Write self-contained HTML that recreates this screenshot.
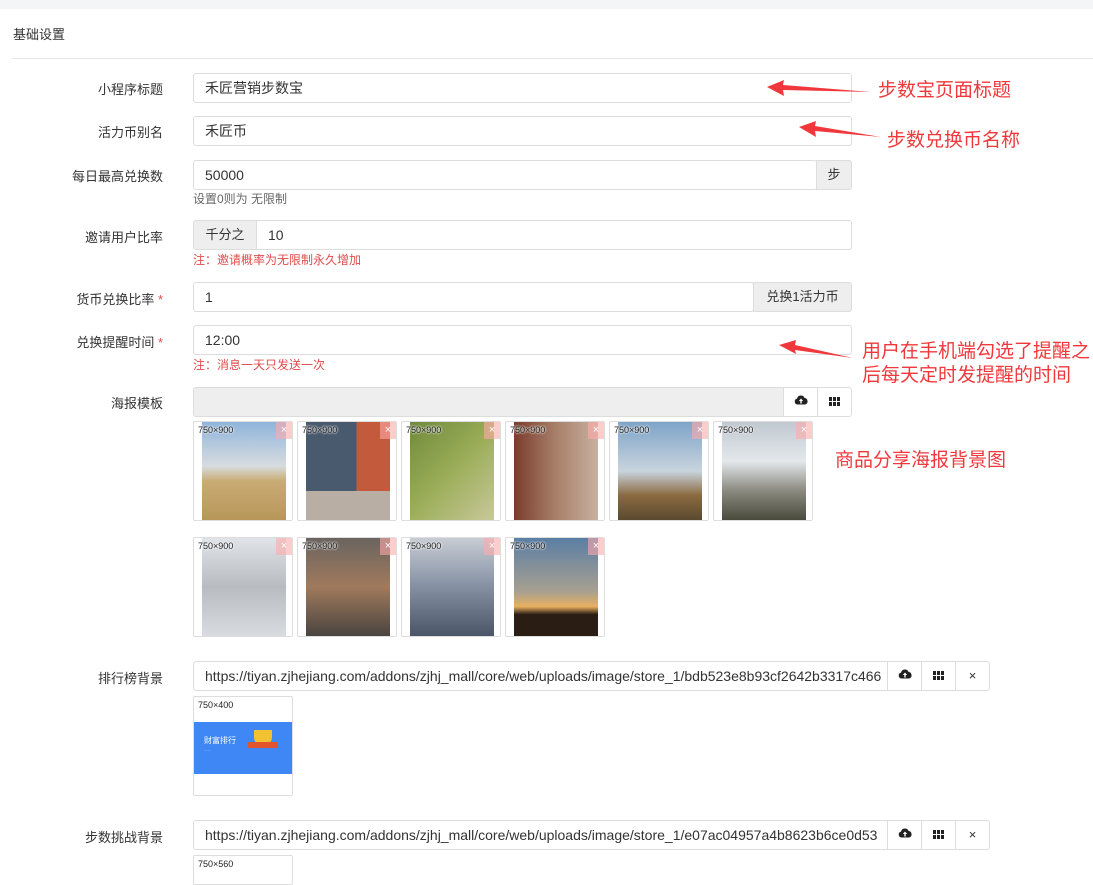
<!DOCTYPE html><html><head><meta charset="utf-8"><style>
*{box-sizing:border-box;margin:0;padding:0}
body{width:1093px;height:867px;overflow:hidden;background:#fff;font-family:"Liberation Sans","Noto Sans CJK SC",sans-serif;font-size:13px;color:#333;position:relative}
.a{position:absolute}
.top{left:0;top:0;width:1093px;height:9px;background:#f4f5f7}
.lbl{width:163px;left:0;text-align:right;font-size:13px;color:#333}
.inp{border:1px solid #ddd;border-radius:3px;height:30px;line-height:28px;padding-left:11px;font-size:14px;color:#333;background:#fff}
.add{background:#eeeeef;border:1px solid #ddd;height:30px;line-height:28px;text-align:center;font-size:13px;color:#333}
.red{color:#e04c4c;font-size:12px}
.help{color:#666;font-size:12px}
.th{width:100px;height:100px;border:1px solid #ddd;border-radius:2px;background:#fff;overflow:hidden}
.th .im{position:absolute;left:8px;top:0;width:84px;height:98px}
.th .s{position:absolute;left:4px;top:3px;font-size:9px;color:#222;text-shadow:0 0 2px #fff,0 0 2px #fff}
.th .x{position:absolute;right:0;top:0;width:16px;height:17px;background:rgba(255,170,170,.6);color:#fff;font-size:11px;text-align:center;line-height:17px}
.btn{border:1px solid #ddd;height:30px;width:35px;background:#fff;text-align:center;line-height:28px}
.ann{color:#f0383c;font-size:19px;font-family:"Noto Sans CJK SC",sans-serif;line-height:24px}
</style></head><body>
<div class="a top"></div>
<div class="a" style="left:13px;top:24px;font-size:13px">基础设置</div>
<div class="a" style="left:12px;top:58px;width:1081px;height:1px;background:#e6e6e6"></div>

<div class="a lbl" style="top:79px">小程序标题</div>
<div class="a inp" style="left:193px;top:73px;width:659px">禾匠营销步数宝</div>
<div class="a lbl" style="top:122px">活力币别名</div>
<div class="a inp" style="left:193px;top:116px;width:659px">禾匠币</div>
<div class="a lbl" style="top:166px">每日最高兑换数</div>
<div class="a inp" style="left:193px;top:160px;width:624px">50000</div>
<div class="a add" style="left:816px;top:160px;width:36px;border-radius:0 3px 3px 0">步</div>
<div class="a help" style="left:193px;top:190px">设置0则为 无限制</div>
<div class="a lbl" style="top:227px">邀请用户比率</div>
<div class="a add" style="left:193px;top:220px;width:64px;border-radius:3px 0 0 3px">千分之</div>
<div class="a inp" style="left:256px;top:220px;width:596px;border-radius:0 3px 3px 0">10</div>
<div class="a red" style="left:193px;top:251px">注：邀请概率为无限制永久增加</div>
<div class="a lbl" style="top:289px">货币兑换比率 <span style="color:#e04c4c">*</span></div>
<div class="a inp" style="left:193px;top:282px;width:561px">1</div>
<div class="a add" style="left:753px;top:282px;width:99px;border-radius:0 3px 3px 0">兑换1活力币</div>
<div class="a lbl" style="top:332px">兑换提醒时间 <span style="color:#e04c4c">*</span></div>
<div class="a inp" style="left:193px;top:325px;width:659px">12:00</div>
<div class="a red" style="left:193px;top:356px">注：消息一天只发送一次</div>
<div class="a lbl" style="top:393px">海报模板</div>
<div class="a add" style="left:193px;top:387px;width:591px;border-radius:3px 0 0 3px"></div>
<div class="a btn" style="left:783px;top:387px"><svg width="14" height="12" viewBox="0 0 14 12"><path d="M3.5 10.5A3 3 0 0 1 3 4.6 4 4 0 0 1 10.6 4 3.3 3.3 0 0 1 11 10.5Z" fill="#222"/><path d="M7 4.5L4.8 7H6.3V9.5H7.7V7H9.2Z" fill="#fff"/></svg></div>
<div class="a btn" style="left:817px;top:387px;border-radius:0 3px 3px 0"><svg width="11" height="9" viewBox="0 0 11 9"><g fill="#222"><rect x="0" y="0" width="3" height="4"/><rect x="4" y="0" width="3" height="4"/><rect x="8" y="0" width="3" height="4"/><rect x="0" y="5" width="3" height="4"/><rect x="4" y="5" width="3" height="4"/><rect x="8" y="5" width="3" height="4"/></g></svg></div>

<div class="a th" style="left:193px;top:421px"><div class="im" style="background:linear-gradient(#8fb4dc,#d7dce0 45%,#c9ac74 60%,#b8965a)"></div><div class="s">750×900</div><div class="x">×</div></div>
<div class="a th" style="left:297px;top:421px"><div class="im" style="background:linear-gradient(90deg,#4a5a6e 60%,#c45a3c 60%);"><div style="position:absolute;bottom:0;width:100%;height:30%;background:#b8aea4"></div></div><div class="s">750×900</div><div class="x">×</div></div>
<div class="a th" style="left:401px;top:421px"><div class="im" style="background:linear-gradient(135deg,#6f8a3c,#9bad58 50%,#c8c89a)"></div><div class="s">750×900</div><div class="x">×</div></div>
<div class="a th" style="left:505px;top:421px"><div class="im" style="background:linear-gradient(90deg,#7a3c2c,#a8806a 50%,#c8b0a0)"></div><div class="s">750×900</div><div class="x">×</div></div>
<div class="a th" style="left:609px;top:421px"><div class="im" style="background:linear-gradient(#7ea4c8,#c8d4de 50%,#8a6a40 75%,#5a4a30)"></div><div class="s">750×900</div><div class="x">×</div></div>
<div class="a th" style="left:713px;top:421px"><div class="im" style="background:linear-gradient(#c0c8d0,#e4e8ec 40%,#8a8a80 70%,#4a4a3c)"></div><div class="s">750×900</div><div class="x">×</div></div>

<div class="a th" style="left:193px;top:537px"><div class="im" style="background:linear-gradient(#e0e4e8,#b8bcc0 50%,#d8dce0)"></div><div class="s">750×900</div><div class="x">×</div></div>
<div class="a th" style="left:297px;top:537px"><div class="im" style="background:linear-gradient(#6a6460,#a07a5c 50%,#4a4440)"></div><div class="s">750×900</div><div class="x">×</div></div>
<div class="a th" style="left:401px;top:537px"><div class="im" style="background:linear-gradient(#c8ccd4,#8a96a8 45%,#4a5668)"></div><div class="s">750×900</div><div class="x">×</div></div>
<div class="a th" style="left:505px;top:537px"><div class="im" style="background:linear-gradient(#5a7ea4,#a8a090 55%,#e8b060 70%,#2a1e14 78%)"></div><div class="s">750×900</div><div class="x">×</div></div>

<div class="a lbl" style="top:668px">排行榜背景</div>
<div class="a inp" style="left:193px;top:661px;width:695px;overflow:hidden;white-space:nowrap;border-radius:3px 0 0 3px">https://tiyan.zjhejiang.com/addons/zjhj_mall/core/web/uploads/image/store_1/bdb523e8b93cf2642b3317c466</div>
<div class="a btn" style="left:887px;top:661px"><svg width="14" height="12" viewBox="0 0 14 12"><path d="M3.5 10.5A3 3 0 0 1 3 4.6 4 4 0 0 1 10.6 4 3.3 3.3 0 0 1 11 10.5Z" fill="#222"/><path d="M7 4.5L4.8 7H6.3V9.5H7.7V7H9.2Z" fill="#fff"/></svg></div>
<div class="a btn" style="left:921px;top:661px"><svg width="11" height="9" viewBox="0 0 11 9"><g fill="#222"><rect x="0" y="0" width="3" height="4"/><rect x="4" y="0" width="3" height="4"/><rect x="8" y="0" width="3" height="4"/><rect x="0" y="5" width="3" height="4"/><rect x="4" y="5" width="3" height="4"/><rect x="8" y="5" width="3" height="4"/></g></svg></div>
<div class="a btn" style="left:955px;top:661px;border-radius:0 3px 3px 0;font-size:13px">×</div>
<div class="a th" style="left:193px;top:696px"><div class="s">750×400</div><div style="position:absolute;left:0;top:25px;width:98px;height:52px;background:#3f87f5"><div style="position:absolute;left:10px;top:13px;color:#fff;font-size:8px">财富排行</div><div style="position:absolute;left:10px;top:25px;color:#cfe0ff;font-size:4px">......</div><div style="position:absolute;left:60px;top:8px;width:18px;height:16px;background:#f2c230;border-radius:0 0 9px 9px"></div><div style="position:absolute;left:54px;top:20px;width:30px;height:6px;background:#e2542c"></div></div></div>

<div class="a lbl" style="top:827px">步数挑战背景</div>
<div class="a inp" style="left:193px;top:820px;width:695px;overflow:hidden;white-space:nowrap;border-radius:3px 0 0 3px">https://tiyan.zjhejiang.com/addons/zjhj_mall/core/web/uploads/image/store_1/e07ac04957a4b8623b6ce0d53</div>
<div class="a btn" style="left:887px;top:820px"><svg width="14" height="12" viewBox="0 0 14 12"><path d="M3.5 10.5A3 3 0 0 1 3 4.6 4 4 0 0 1 10.6 4 3.3 3.3 0 0 1 11 10.5Z" fill="#222"/><path d="M7 4.5L4.8 7H6.3V9.5H7.7V7H9.2Z" fill="#fff"/></svg></div>
<div class="a btn" style="left:921px;top:820px"><svg width="11" height="9" viewBox="0 0 11 9"><g fill="#222"><rect x="0" y="0" width="3" height="4"/><rect x="4" y="0" width="3" height="4"/><rect x="8" y="0" width="3" height="4"/><rect x="0" y="5" width="3" height="4"/><rect x="4" y="5" width="3" height="4"/><rect x="8" y="5" width="3" height="4"/></g></svg></div>
<div class="a btn" style="left:955px;top:820px;border-radius:0 3px 3px 0">×</div>
<div class="a th" style="left:193px;top:855px;height:30px"><div class="s">750×560</div></div>

<div class="a ann" style="left:878px;top:77px">步数宝页面标题</div>
<div class="a ann" style="left:887px;top:127px">步数兑换币名称</div>
<div class="a ann" style="left:862px;top:338px">用户在手机端勾选了提醒之<br>后每天定时发提醒的时间</div>
<div class="a ann" style="left:835px;top:447px">商品分享海报背景图</div>
<svg class="a" style="left:0;top:0" width="1093" height="867">
<g fill="#f0383c">
<polygon points="767,87 784,80 783,85 871,92 783,90 784,96"/>
<polygon points="799,127 816,121 815,126 881,137 815,131 816,137"/>
<polygon points="779,345 796,340 795,345 853,358 795,350 796,354"/>
</g></svg>
</body></html>
